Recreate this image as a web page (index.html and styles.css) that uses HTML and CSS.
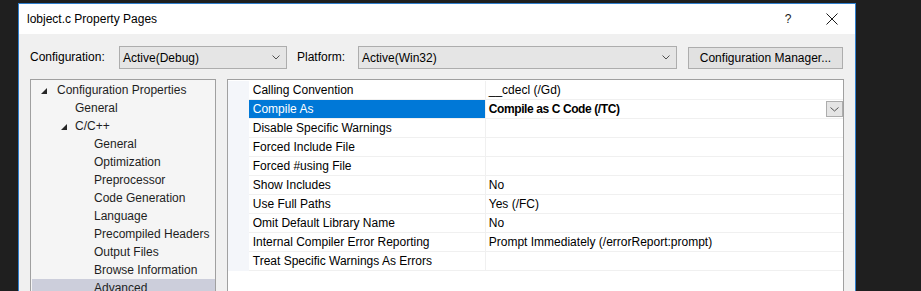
FILE: index.html
```html
<!DOCTYPE html>
<html>
<head>
<meta charset="utf-8">
<link rel="stylesheet" href="styles.css">
</head>
<body>
<div class="dialog">
  <div class="titlebar">
    <span class="title">lobject.c Property Pages</span>
    <span class="help">?</span>
    <span class="close"><svg width="12" height="12" viewBox="0 0 12 12"><path d="M0.5 0.5 L11.5 11.5 M11.5 0.5 L0.5 11.5" stroke="#1a1a1a" stroke-width="1" fill="none"/></svg></span>
  </div>
  <div class="content">
    <div class="config-row">
      <span class="label cfg-label">Configuration:</span>
      <div class="combo cfg-combo"><span>Active(Debug)</span><svg class="chev" width="8" height="5" viewBox="0 0 8 5"><path d="M0.5 0.5 L4 4 L7.5 0.5" stroke="#505050" fill="none"/></svg></div>
      <span class="label plat-label">Platform:</span>
      <div class="combo plat-combo"><span>Active(Win32)</span><svg class="chev" width="8" height="5" viewBox="0 0 8 5"><path d="M0.5 0.5 L4 4 L7.5 0.5" stroke="#505050" fill="none"/></svg></div>
      <div class="btn">Configuration Manager...</div>
    </div>
    <div class="main">
      <div class="tree">
        <div class="node lvl0"><span class="twisty"><svg width="6" height="6" viewBox="0 0 6 6"><polygon points="6,0 6,6 0,6" fill="#262626"/></svg></span>Configuration Properties</div>
        <div class="node leaf1">General</div>
        <div class="node lvl1"><span class="twisty"><svg width="6" height="6" viewBox="0 0 6 6"><polygon points="6,0 6,6 0,6" fill="#262626"/></svg></span>C/C++</div>
        <div class="node leaf2">General</div>
        <div class="node leaf2">Optimization</div>
        <div class="node leaf2">Preprocessor</div>
        <div class="node leaf2">Code Generation</div>
        <div class="node leaf2">Language</div>
        <div class="node leaf2">Precompiled Headers</div>
        <div class="node leaf2">Output Files</div>
        <div class="node leaf2">Browse Information</div>
        <div class="node leaf2 selected">Advanced</div>
      </div>
      <div class="grid">
        <div class="rows">
          <div class="gutter"></div><div class="name">Calling Convention</div><div class="value">__cdecl (/Gd)</div>
          <div class="gutter"></div><div class="name name-sel">Compile As</div><div class="value value-sel"><span class="bold">Compile as C Code (/TC)</span><span class="drop"><svg width="9" height="5" viewBox="0 0 9 5"><path d="M0.5 0.5 L4.5 4 L8.5 0.5" stroke="#555" fill="none"/></svg></span></div>
          <div class="gutter"></div><div class="name">Disable Specific Warnings</div><div class="value"></div>
          <div class="gutter"></div><div class="name">Forced Include File</div><div class="value"></div>
          <div class="gutter"></div><div class="name">Forced #using File</div><div class="value"></div>
          <div class="gutter"></div><div class="name">Show Includes</div><div class="value">No</div>
          <div class="gutter"></div><div class="name">Use Full Paths</div><div class="value">Yes (/FC)</div>
          <div class="gutter"></div><div class="name">Omit Default Library Name</div><div class="value">No</div>
          <div class="gutter"></div><div class="name">Internal Compiler Error Reporting</div><div class="value">Prompt Immediately (/errorReport:prompt)</div>
          <div class="gutter"></div><div class="name">Treat Specific Warnings As Errors</div><div class="value"></div>
        </div>
      </div>
    </div>
  </div>
</div>
</body>
</html>
```
FILE: styles.css
```css
html, body {
  margin: 0;
  padding: 0;
  height: 291px;
  overflow: hidden;
  background: #1f1f1f;
  font-family: "Liberation Sans", Arial, sans-serif;
  font-size: 12px;
  color: #000;
}

.dialog {
  box-sizing: border-box;
  margin: 3px 0 0 18px;
  width: 838px;
  height: 320px;
  border: 1px solid #2f7fce;
  background: #f0f0f0;
}

.titlebar {
  height: 30px;
  background: #fff;
  display: flex;
  align-items: center;
  padding: 0 17px 0 8px;
}

.title {
  flex: 1;
  color: #000;
}

.help {
  width: 14px;
  text-align: center;
  margin-right: 31px;
  color: #1a1a1a;
}

.close {
  width: 12px;
  height: 12px;
  display: flex;
}

.content {
  padding: 12px 11px 0 11px;
}

.config-row {
  display: flex;
  align-items: flex-start;
  height: 23px;
}

.label {
  line-height: 23px;
  white-space: nowrap;
}

.cfg-label {
  width: 89px;
}

.plat-label {
  margin-left: 10px;
  width: 61px;
}

.combo {
  box-sizing: border-box;
  height: 23px;
  border: 1px solid #adadad;
  background: #e5e5e5;
  display: flex;
  align-items: center;
  justify-content: space-between;
  padding: 0 6px 0 3px;
}

.cfg-combo {
  width: 168px;
}

.plat-combo {
  width: 319px;
}

.chev {
  display: block;
}

.btn {
  box-sizing: border-box;
  margin-left: 11px;
  margin-top: 1px;
  width: 155px;
  height: 22px;
  border: 1px solid #adadad;
  background: #e1e1e1;
  display: flex;
  align-items: center;
  justify-content: center;
  white-space: nowrap;
}

.main {
  display: flex;
  gap: 11px;
  margin-top: 10px;
}

.tree {
  box-sizing: border-box;
  width: 186px;
  height: 240px;
  border: 1px solid #a0a0a0;
  background: #f5f5f5;
  padding-top: 1px;
  color: #1e1e1e;
}

.node {
  height: 18px;
  display: flex;
  align-items: center;
  white-space: nowrap;
}

.twisty {
  width: 16px;
  height: 18px;
  display: flex;
  align-items: center;
}

.twisty svg {
  display: block;
  margin-top: 1px;
}

.lvl0 {
  padding-left: 10px;
}

.lvl1 {
  padding-left: 28px;
}

.lvl1 .twisty svg {
  margin-left: 2px;
}

.leaf1 {
  padding-left: 44px;
}

.leaf2 {
  padding-left: 63px;
}

.selected {
  background: #cccedb;
  margin-left: 1px;
  padding-left: 62px;
}

.grid {
  box-sizing: border-box;
  width: 618px;
  height: 240px;
  border: 1px solid #a0a0a0;
  background: #fff;
  padding-top: 1px;
}

.rows {
  display: grid;
  grid-template-columns: 21px 237px 1fr;
}

.gutter {
  height: 19px;
  background: #f4f6fa;
}

.name, .value {
  box-sizing: border-box;
  height: 19px;
  line-height: 18px;
  border-bottom: 1px solid #f0f0f0;
  white-space: nowrap;
  overflow: hidden;
}

.name {
  padding-left: 4px;
  border-right: 1px solid #f0f0f0;
}

.value {
  padding-left: 3px;
}

.name-sel {
  background: #0078d7;
  color: #fff;
}

.value-sel {
  display: flex;
  align-items: center;
  justify-content: space-between;
}

.bold {
  font-weight: bold;
  letter-spacing: -0.4px;
}

.drop {
  box-sizing: border-box;
  width: 17px;
  height: 16px;
  border: 1px solid #adadad;
  background: #e5e5e5;
  display: flex;
  align-items: center;
  justify-content: center;
}

.drop svg {
  display: block;
}
```
